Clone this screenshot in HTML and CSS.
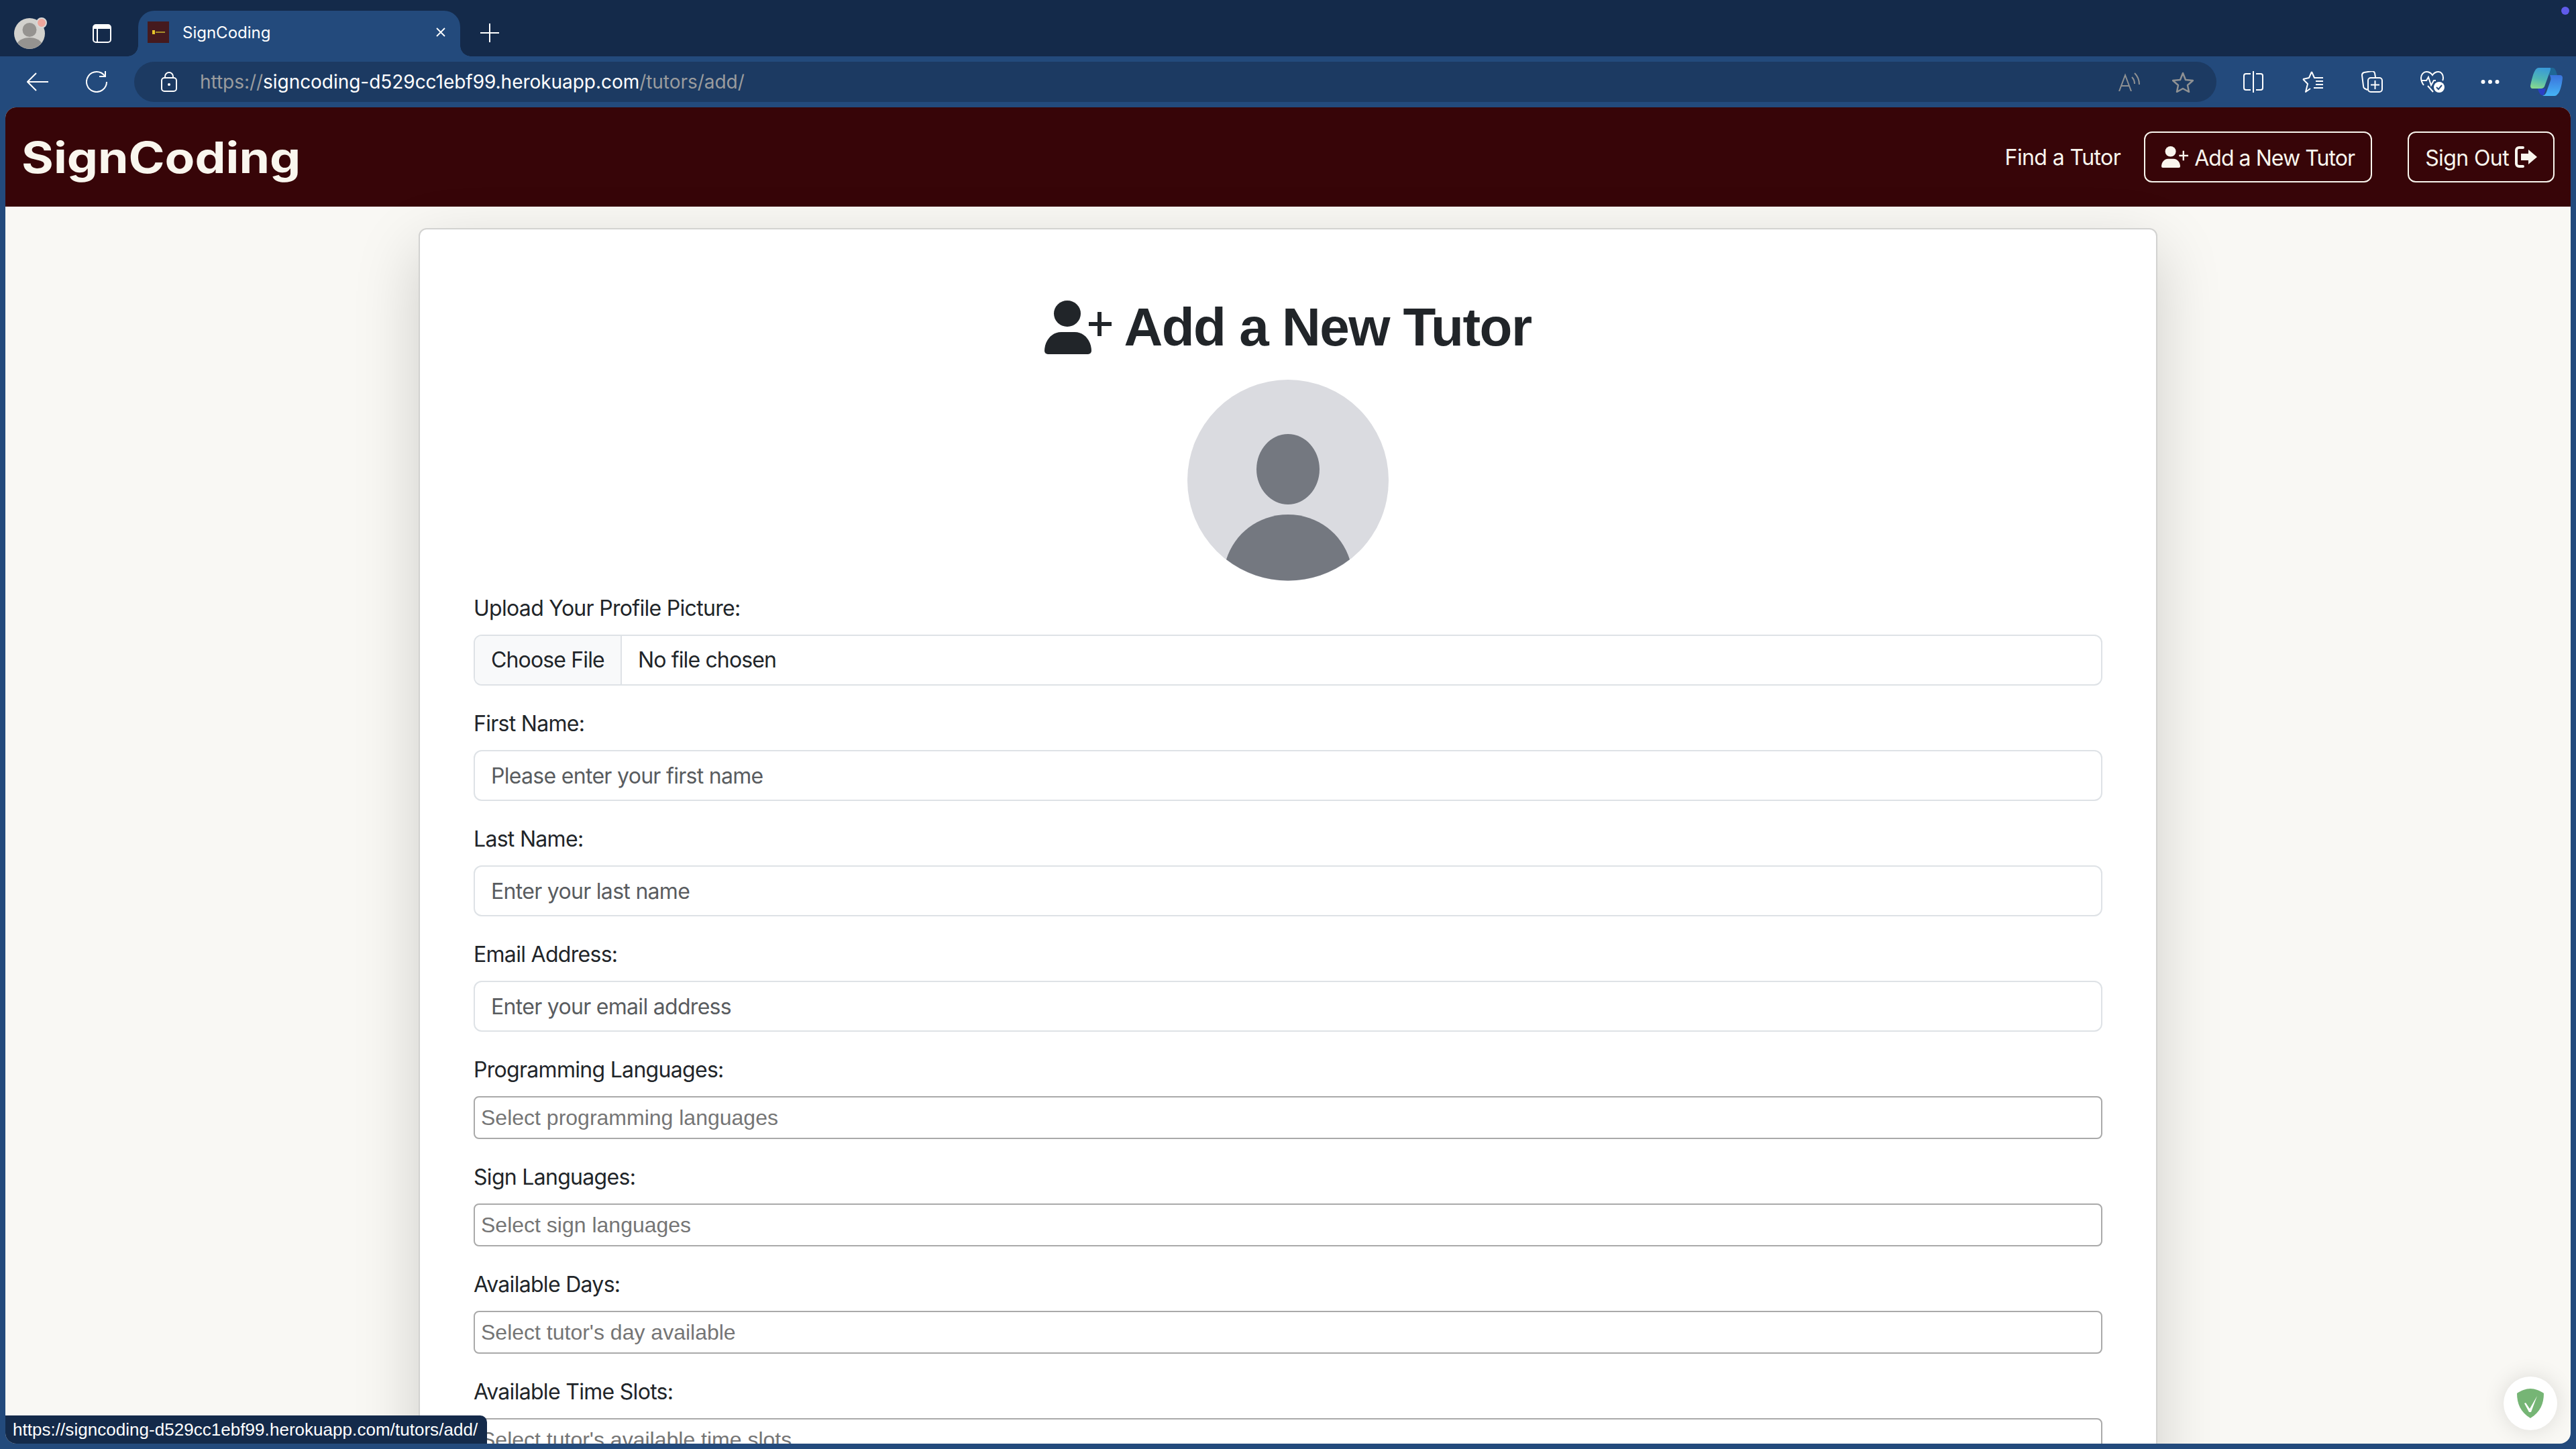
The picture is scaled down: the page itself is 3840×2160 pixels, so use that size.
FILE: index.html
```html
<!DOCTYPE html>
<html lang="en">
<head>
<meta charset="utf-8">
<title>SignCoding</title>
<link rel="stylesheet" href="styles.css">
</head>
<body>
<svg class="defs" width="0" height="0" aria-hidden="true">
  <defs>
    <symbol id="person-plus" viewBox="0 0 100 80">
      <ellipse cx="34" cy="19.5" rx="20" ry="19.5"/>
      <path d="M5 80a5 5 0 0 1-5-5C0 62 9 47 25 47h20c16 0 25 15 25 28a5 5 0 0 1-5 5z"/>
      <path d="M79 17h6v15h15v6H85v15h-6V38H66v-6h13z"/>
    </symbol>
  </defs>
</svg>

<header class="tabstrip">
  <div class="profile">
    <svg width="50" height="68" viewBox="0 0 50 68"><circle cx="24" cy="34" r="23" fill="#d2d1cd"/><circle cx="24" cy="28.5" r="10.5" fill="#959390"/><path d="M6 48c3-5 10-8 18-8s15 3 18 8a23 23 0 0 1-36 0z" fill="#959390"/><circle cx="42" cy="18" r="7" fill="#eea69c" stroke="#d8d8d6" stroke-width="2"/></svg>
  </div>
  <svg class="tabs-icon" width="28" height="28" viewBox="0 0 28 28" fill="none" stroke="#fff" stroke-width="2"><rect x="1" y="1" width="26" height="26" rx="4"/><path d="M1 6h26M7 6v21"/><path d="M2 2h24v5H2z" fill="#fff" stroke="none"/></svg>
  <div class="tab">
    <span class="favicon"><i class="fav-key"></i><i class="fav-text"></i></span>
    <span class="tab-title">SignCoding</span>
    <svg class="tab-close" width="16" height="16" viewBox="0 0 16 16" stroke="#fff" stroke-width="1.8"><path d="M2 2l12 12M14 2L2 14"/></svg>
  </div>
  <svg class="new-tab" width="28" height="28" viewBox="0 0 28 28" stroke="#fff" stroke-width="2"><path d="M14 0v28M0 14h28"/></svg>
  <span class="ext-dot"></span>
</header>

<nav class="toolbar">
  <svg class="t-back" width="32" height="28" viewBox="0 0 32 28" fill="none" stroke="#fff" stroke-width="2"><path d="M32 14H1M14 1L1 14l13 13"/></svg>
  <svg class="t-reload" width="32" height="32" viewBox="0 0 32 32" fill="none" stroke="#fff" stroke-width="2"><path d="M28 7A15 15 0 1 0 31 16"/><path d="M29 0v8h-9"/></svg>
  <div class="address">
    <svg class="lock" width="24" height="30" viewBox="0 0 24 30" fill="none" stroke="#fff" stroke-width="2"><rect x="1" y="9" width="22" height="20" rx="4"/><path d="M6 9V7a6 6 0 0 1 12 0v2"/><circle cx="12" cy="19" r="2" fill="#fff" stroke="none"/></svg>
    <span class="url"><span class="url-dim">https://</span>signcoding-d529cc1ebf99.herokuapp.com<span class="url-dim">/tutors/add/</span></span>
    <svg class="read" width="32" height="28" viewBox="0 0 32 28" fill="none" stroke="#8f9193" stroke-width="2"><path d="M1 28L10 4l9 24M4 20h12"/><path d="M20 7c3 3 4 6 4 10M24 1c5 5 7 10 7 17"/></svg>
    <svg class="star" width="32" height="31" viewBox="0 0 32 31" fill="none" stroke="#8f9193" stroke-width="2.5"><path d="M16 2l4 10 11 1-8 7 2 10-9-5-9 5 2-10-8-7 11-1z" stroke-linejoin="round"/></svg>
  </div>
  <div class="tools">
    <svg width="30" height="32" viewBox="0 0 30 32" fill="none" stroke="#fff" stroke-width="2"><path d="M11 4H4a3 3 0 0 0-3 3v18a3 3 0 0 0 3 3h7M19 4h7a3 3 0 0 1 3 3v18a3 3 0 0 1-3 3h-7M15 0v32"/></svg>
    <svg class="tool-fav" width="32" height="32" viewBox="0 0 32 32" fill="none" stroke="#fff" stroke-width="2"><path d="M14 1l4 9h3M1 12l9-2 4-9M1 12l7 7-3 12 7-5M20 15h11M20 20h11M17 25h14M21 10h10" stroke-linejoin="round"/></svg>
    <svg width="32" height="32" viewBox="0 0 32 32" fill="none" stroke="#fff" stroke-width="2"><path d="M9 28L5 26Q3 25 3 22L1 6Q1 3 4 2L16 0Q19 0 20 3L21 9"/><rect x="10" y="10" width="21" height="21" rx="4"/><path d="M20.5 14v13M14 20.5h13"/></svg>
    <svg width="36" height="32" viewBox="0 0 36 32" fill="none" stroke="#fff" stroke-width="2"><path d="M5 21C2 17 1 14 1 10 1 5 5 1 9 1c4 0 7 2 9 5 2-3 5-5 9-5 4 0 7 4 7 9 0 1 0 3-1 4M11 22l8 9"/><path d="M1 14h8l3-5 4 12 4-7h3"/><circle cx="28" cy="24" r="8" fill="#fff" stroke="none"/><path d="M24 24l3 3 5-6" stroke="#234a7c"/></svg>
    <svg class="tool-more" width="28" height="8" viewBox="0 0 28 8" fill="#fff"><circle cx="3.5" cy="4" r="3"/><circle cx="14" cy="4" r="3"/><circle cx="24.5" cy="4" r="3"/></svg>
    <svg class="copilot" width="48" height="42" viewBox="0 0 48 42">
      <defs>
        <linearGradient id="cp1" x1="0.6" y1="0" x2="0.4" y2="1"><stop offset="0" stop-color="#3a9ad8"/><stop offset="0.55" stop-color="#4fb7b4"/><stop offset="1" stop-color="#86d890"/></linearGradient>
        <linearGradient id="cp2" x1="0.5" y1="0" x2="0.5" y2="1"><stop offset="0" stop-color="#3a72dc"/><stop offset="1" stop-color="#45b4f5"/></linearGradient>
      </defs>
      <path d="M11 31h12l-3 10H18c-3 0-6-5-7-10z" fill="#2a3fc4"/>
      <path d="M28 0h5c3 0 5 3 7 11H28z" fill="#1e6796"/>
      <path d="M13 0h16c2 0 1 3 0 6l-8 22c-1 2-3 3-5 3H3c-2 0-3-2-3-4 2-10 4-18 7-23 1-2 3-4 6-4z" fill="url(#cp1)"/>
      <path d="M29 11h15c3 0 4 2 4 4-1 11-4 22-8 25-1 1-2 2-4 2H18c3-1 5-3 6-6l6-17c1-2 0-6-1-8z" fill="url(#cp2)"/>
    </svg>
  </div>
</nav>

<div class="viewport">
  <div class="site-nav">
    <a class="brand">SignCoding</a>
    <div class="nav-links">
      <a class="nav-link">Find a Tutor</a>
      <a class="nav-btn nav-btn-add"><svg class="nav-ico" viewBox="0 0 100 80" width="40" height="32"><use href="#person-plus"/></svg>Add a New Tutor</a>
      <a class="nav-btn nav-btn-out">Sign Out<svg class="nav-ico" viewBox="0 0 33 32" width="33" height="32"><path d="M12 2H6a4 4 0 0 0-4 4v20a4 4 0 0 0 4 4h6" fill="none" stroke="currentColor" stroke-width="4" stroke-linecap="round"/><path d="M20 5l13 11-13 11v-6H9V11h11z" fill="currentColor"/></svg></a>
    </div>
  </div>

  <main class="page">
    <section class="card">
      <h1 class="title"><svg class="title-ico" viewBox="0 0 100 80" width="100" height="80"><use href="#person-plus"/></svg>Add a New Tutor</h1>
      <div class="avatar-wrap">
        <svg class="avatar" width="300" height="300" viewBox="0 0 300 300">
          <circle cx="150" cy="150" r="150" fill="#dadbe0"/>
          <ellipse cx="150" cy="133.5" rx="47" ry="52.5" fill="#747880"/>
          <path d="M58 268C70 230 105 201 150 201s80 29 92 67A150 150 0 0 1 58 268z" fill="#747880"/>
        </svg>
      </div>
      <form class="form">
        <div class="field">
          <label class="label" for="pic">Upload Your Profile Picture:</label>
          <input class="control file" id="pic" type="file">
        </div>
        <div class="field">
          <label class="label" for="fn">First Name:</label>
          <input class="control" id="fn" type="text" placeholder="Please enter your first name">
        </div>
        <div class="field">
          <label class="label" for="ln">Last Name:</label>
          <input class="control" id="ln" type="text" placeholder="Enter your last name">
        </div>
        <div class="field">
          <label class="label" for="em">Email Address:</label>
          <input class="control" id="em" type="text" placeholder="Enter your email address">
        </div>
        <div class="field">
          <label class="label" for="pl">Programming Languages:</label>
          <input class="multi" id="pl" type="text" placeholder="Select programming languages">
        </div>
        <div class="field">
          <label class="label" for="sl">Sign Languages:</label>
          <input class="multi" id="sl" type="text" placeholder="Select sign languages">
        </div>
        <div class="field">
          <label class="label" for="ad">Available Days:</label>
          <input class="multi" id="ad" type="text" placeholder="Select tutor's day available">
        </div>
        <div class="field">
          <label class="label" for="ts">Available Time Slots:</label>
          <input class="multi" id="ts" type="text" placeholder="Select tutor's available time slots">
        </div>
      </form>
    </section>
  </main>

  <div class="status">https://signcoding-d529cc1ebf99.herokuapp.com/tutors/add/</div>
  <div class="shield-badge">
    <svg width="40" height="44" viewBox="0 0 40 44"><path d="M20 0c7 0 14 3 20 7 0 15-5 28-20 37C5 35 0 22 0 7 6 3 13 0 20 0z" fill="#76b575"/><path d="M11 22l2-1 6 9 11-19-9 24h-3z" fill="#fff"/></svg>
  </div>
</div>
</body>
</html>
```
FILE: styles.css
```css
* { box-sizing: border-box; }
html, body { margin: 0; height: 2160px; overflow: hidden; }
body {
  width: 3840px;
  background: #234a7c;
  font-family: Inter, "Liberation Sans", sans-serif;
  color: #212529;
  display: flex;
  flex-direction: column;
}
.defs { position: absolute; }

.tabstrip {
  height: 84px;
  flex: none;
  background: #142a4a;
  display: flex;
  align-items: flex-end;
  position: relative;
  padding-left: 20px;
}
.profile { width: 118px; height: 68px; display: flex; align-items: flex-start; }
.tabs-icon { margin-bottom: 20px; flex: none; }
.tab {
  width: 480px;
  height: 68px;
  margin-left: 40px;
  background: #234a7c;
  border-radius: 24px 24px 0 0;
  display: flex;
  align-items: center;
  padding: 0 0 4px 14px;
  position: relative;
}
.tab::before, .tab::after {
  content: "";
  position: absolute;
  bottom: 0;
  width: 16px;
  height: 16px;
  background: radial-gradient(circle at 0 0, transparent 15.5px, #234a7c 16px);
}
.tab::before { left: -16px; }
.tab::after { right: -16px; background: radial-gradient(circle at 100% 0, transparent 15.5px, #234a7c 16px); }
.favicon {
  width: 32px; height: 32px; background: #451a1e;
  display: flex; align-items: center; justify-content: center; gap: 1px;
}
.fav-key { width: 4px; height: 6px; background: #e6c52a; }
.fav-text { width: 14px; height: 2px; background: #a8902a; }
.tab-title { margin-left: 20px; font-size: 24px; color: #fff; }
.tab-close { margin-left: auto; margin-right: 21px; }
.new-tab { margin: 0 0 21px 30px; }
.ext-dot {
  position: absolute; right: 10px; top: 10px;
  width: 12px; height: 12px; border-radius: 50%; background: #5f5bea;
}

.toolbar {
  height: 76px;
  flex: none;
  display: flex;
  align-items: center;
  padding-left: 40px;
}
.t-back { flex: none; }
.t-reload { flex: none; margin-left: 56px; }
.address {
  flex: 0 0 3104px;
  height: 60px;
  margin-left: 40px;
  background: #1c3a62;
  border-radius: 30px;
  display: flex;
  align-items: center;
  padding-left: 40px;
  padding-right: 34px;
}
.url { margin-left: 34px; font-size: 28px; letter-spacing: -0.04px; color: #fff; white-space: nowrap; }
.url-dim { color: #9a9c9e; }
.read { margin-left: auto; }
.star { margin-left: 48px; }
.tools { display: flex; align-items: center; margin-left: 40px; gap: 56px; }
.tools svg { flex: none; }
.tool-fav { margin-left: 2px; }
.tool-more { margin-left: -2px; }
.tools .copilot { margin-left: -10px; }

.viewport {
  flex: 1;
  margin: 0 8px 8px;
  position: relative;
  overflow: hidden;
  border-radius: 16px;
  background: #f9f8f4;
  display: flex;
  flex-direction: column;
}
.site-nav {
  height: 148px;
  flex: none;
  background: #370508;
  color: #f9f6ee;
  display: flex;
  align-items: center;
  justify-content: space-between;
  padding: 0 24px;
}
.brand {
  font-size: 64px;
  font-weight: 700;
  transform: scaleX(1.143);
  transform-origin: 0 50%;
}
.nav-links { display: flex; align-items: center; font-size: 32px; letter-spacing: -0.6px; }
.nav-link { margin-right: 35px; }
.nav-btn {
  height: 76px;
  border: 2px solid currentColor;
  border-radius: 12px;
  display: flex;
  align-items: center;
  padding: 2px 24px 0;
  gap: 9px;
}
.nav-btn-add { letter-spacing: -0.95px; }
.nav-btn-out { margin-left: 53px; }
.nav-ico { fill: currentColor; flex: none; margin-top: -2px; }

.page { flex: 1; min-height: 0; padding-top: 32px; display: flex; justify-content: center; }
.card {
  width: 2592px;
  height: 2000px;
  flex: none;
  background: #fff;
  border: 2px solid #d2d2d0;
  border-radius: 12px;
  box-shadow: 0 32px 96px rgba(0, 0, 0, .175);
  padding: 98px 80px 0;
}
.title {
  margin: 0 0 30px;
  height: 96px;
  font-family: "Liberation Sans", Arial, sans-serif;
  font-size: 80px;
  font-weight: 700;
  letter-spacing: -1.5px;
  line-height: 96px;
  display: flex;
  justify-content: center;
  align-items: center;
  gap: 18px;
  color: #212529;
}
.title-ico { fill: #212529; flex: none; }
.avatar-wrap { display: flex; justify-content: center; margin-bottom: 16px; }
.avatar { display: block; }
.form { display: flex; flex-direction: column; gap: 32px; }
.label { display: block; font-size: 32px; letter-spacing: -0.7px; line-height: 50px; margin-bottom: 14px; }
.control {
  display: block;
  width: 100%;
  height: 76px;
  border: 2px solid #dee2e6;
  border-radius: 12px;
  background: #fff;
  font-family: Inter, "Liberation Sans", sans-serif;
  font-size: 32px;
  letter-spacing: -0.7px;
  color: #212529;
  padding: 0 24px;
  outline: none;
}
.control::placeholder { color: #595c5f; opacity: 1; }
.file { padding: 0; line-height: 72px; letter-spacing: -0.85px; }
.file::file-selector-button {
  height: 72px;
  padding: 0 24px;
  margin: 0 24px 0 0;
  border: 0;
  border-right: 2px solid #dee2e6;
  border-radius: 0;
  background: #f8f9fa;
  font: inherit;
  letter-spacing: inherit;
  color: #212529;
}
.multi {
  display: block;
  width: 100%;
  height: 64px;
  border: 2px solid #a9a9a9;
  border-radius: 8px;
  background: #fff;
  font-family: "Liberation Sans", Arial, sans-serif;
  font-size: 32px;
  padding: 0 9px;
  outline: none;
}
.multi::placeholder { color: #757575; opacity: 1; }

.status {
  position: absolute;
  left: 0;
  bottom: 0;
  height: 42px;
  padding: 0 14px 0 11px;
  background: #142a4a;
  color: #fff;
  border-radius: 0 10px 0 0;
  font-family: "Liberation Sans", Arial, sans-serif;
  font-size: 26px;
  letter-spacing: 0.04px;
  line-height: 42px;
  white-space: nowrap;
}
.shield-badge {
  position: absolute;
  right: 20px;
  bottom: 20px;
  width: 80px;
  height: 80px;
  border-radius: 50%;
  background: #fff;
  box-shadow: 0 0 32px rgba(0, 0, 0, .12);
  display: flex;
  align-items: center;
  justify-content: center;
}
```
